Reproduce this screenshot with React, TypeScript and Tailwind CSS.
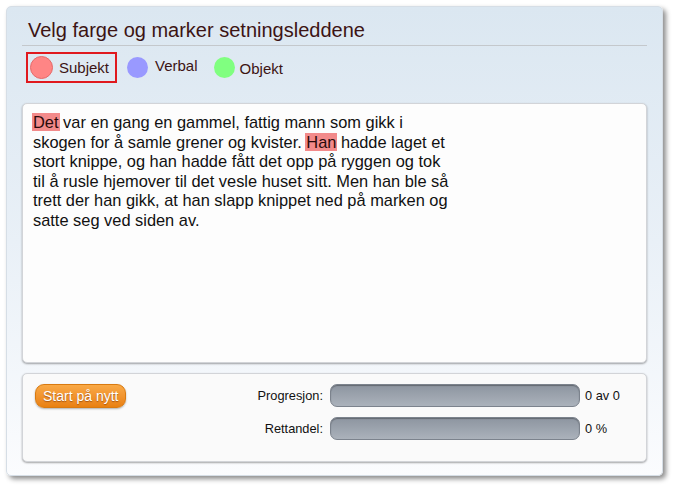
import React from "react";

const lines: { parts: { t: string; hl?: boolean }[] }[] = [
  { parts: [{ t: "Det", hl: true }, { t: " var en gang en gammel, fattig mann som gikk i" }] },
  { parts: [{ t: "skogen for å samle grener og kvister. " }, { t: "Han", hl: true }, { t: " hadde laget et" }] },
  { parts: [{ t: "stort knippe, og han hadde fått det opp på ryggen og tok" }] },
  { parts: [{ t: "til å rusle hjemover til det vesle huset sitt. Men han ble så" }] },
  { parts: [{ t: "trett der han gikk, at han slapp knippet ned på marken og" }] },
  { parts: [{ t: "satte seg ved siden av." }] },
];

export default function App() {
  return (
    <div className="w-[675px] h-[486px] bg-white pt-[6px] pl-[6px] font-['Liberation_Sans',Arial,sans-serif]">
      <div className="w-[657px] h-[470px] rounded-[5px] bg-gradient-to-b from-[#dbe7f1] via-[#e9f0f7] to-[#fbfcfe] shadow-[3px_3px_5px_rgba(0,0,0,0.45)] border border-[#d6dee6] px-[15px] pt-[10px] flex flex-col">
        <div className="border-b border-[#c4c8cc] h-[29px] pl-[6px] text-[20px] leading-[26px] text-[#3c1414]">
          Velg farge og marker setningsleddene
        </div>
        <div className="flex items-center h-[31px] mt-[6px] pl-[4px] text-[15px] text-[#3c1414]">
          <div className="flex items-center h-[31px] w-[91px] border-2 border-[#e0191e] pl-[2px]">
            <div className="w-[23px] h-[23px] rounded-full bg-[#ff8585] border border-[#e66a6a]" />
            <span className="ml-[6px] mt-[1px]">Subjekt</span>
          </div>
          <div className="flex items-center ml-[10px]">
            <div className="w-[21px] h-[21px] rounded-full bg-[#9999ff]" />
            <span className="ml-[7px] -mt-[3px]">Verbal</span>
          </div>
          <div className="flex items-center ml-[16px]">
            <div className="w-[21px] h-[21px] rounded-full bg-[#80ff80]" />
            <span className="ml-[5px] mt-[3px]">Objekt</span>
          </div>
        </div>
        <div className="mt-[20px] h-[260px] rounded-[5px] bg-[#fdfdfd] border border-[#d2d4d8] shadow-[0_1px_2px_rgba(0,0,0,0.35)] pl-[10px] pt-[9px] text-[16.4px] leading-[19.5px] text-[#111]">
          {lines.map((l, i) => (
            <div key={i} className="whitespace-pre">
              {l.parts.map((p, j) =>
                p.hl ? (
                  <span key={j} className="bg-[#f28a8a] px-[1px] -mx-[1px] text-[#2a0a0a]">{p.t}</span>
                ) : (
                  <span key={j}>{p.t}</span>
                )
              )}
            </div>
          ))}
        </div>
        <div className="mt-[10px] h-[89px] rounded-[5px] bg-[#fafafa] border border-[#d2d4d8] shadow-[0_1px_2px_rgba(0,0,0,0.35)] flex pt-[10px] pl-[12px]">
          <div className="w-[212px]">
            <button className="h-[24px] px-[7px] rounded-[9px] border border-[#d97a10] bg-gradient-to-b from-[#f9a945] to-[#e9800f] text-white text-[14px] leading-[20px] [text-shadow:0_1px_1px_rgba(120,50,0,0.6)] shadow-[0_1px_2px_rgba(0,0,0,0.3)]">
              Start på nytt
            </button>
          </div>
          <div className="flex flex-col gap-[10px] text-[12.8px] text-[#111]">
            <div className="flex items-center h-[23px]">
              <span className="w-[76px] text-right">Progresjon:</span>
              <div className="ml-[7px] w-[250px] h-[23px] rounded-[7px] bg-gradient-to-b from-[#8d95a0] to-[#abb2bb] border border-[#7c838d] shadow-[inset_0_1px_1px_rgba(0,0,0,0.3)]" />
              <span className="ml-[5px]">0 av 0</span>
            </div>
            <div className="flex items-center h-[23px]">
              <span className="w-[76px] text-right">Rettandel:</span>
              <div className="ml-[7px] w-[250px] h-[23px] rounded-[7px] bg-gradient-to-b from-[#8d95a0] to-[#abb2bb] border border-[#7c838d] shadow-[inset_0_1px_1px_rgba(0,0,0,0.3)]" />
              <span className="ml-[5px]">0 %</span>
            </div>
          </div>
        </div>
      </div>
    </div>
  );
}
